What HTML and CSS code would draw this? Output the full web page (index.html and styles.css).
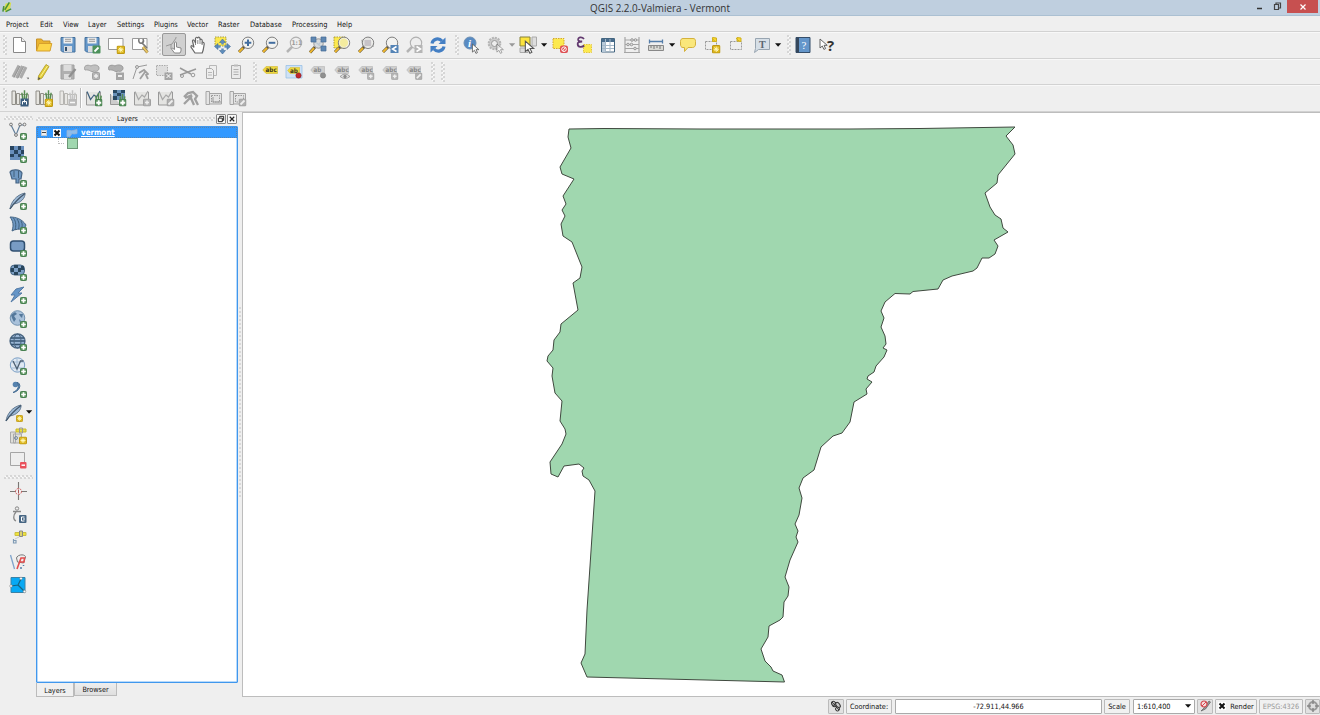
FILE: index.html
```html
<!DOCTYPE html>
<html lang="en">
<head>
<meta charset="utf-8">
<title>QGIS 2.2.0-Valmiera - Vermont</title>
<link rel="stylesheet" href="styles.css">
</head>
<body>
<svg class="defs" aria-hidden="true">
  <defs>
    <symbol id="plus" viewBox="0 0 7 7"><rect x=".5" y=".5" width="6" height="6" rx=".8" fill="#5c9560" stroke="#478050"/><path d="M3.500 1.200v4.600M1.200 3.500h4.600" stroke="#fff" stroke-width="1.700"/></symbol>
    <symbol id="star" viewBox="0 0 8 8"><rect x=".5" y=".5" width="7" height="7" rx="1" fill="#dfb81f" stroke="#bd9815"/><path d="M4 1.500v5M1.500 4h5M2.300 2.300l3.400 3.400M5.700 2.300L2.300 5.700" stroke="#fff9bd" stroke-width=".9"/></symbol>
    <symbol id="gbadge" viewBox="0 0 8 8"><rect x=".5" y=".5" width="7" height="7" rx="1" fill="#b5b5b5" stroke="#a0a0a0"/><path d="M4 2v4M2 4h4" stroke="#eee" stroke-width="1.500"/></symbol>
    <symbol id="gpen" viewBox="0 0 8 8"><rect x=".5" y=".5" width="7" height="7" rx="1" fill="#b0b0b0" stroke="#a0a0a0"/><path d="M2 6l4-4" stroke="#eee" stroke-width="1.800"/></symbol>
    <symbol id="lens" viewBox="0 0 18 18"><path d="M7.500 10.500L2 16" stroke="#5c533c" stroke-width="3"/><path d="M6 12l-4 4" stroke="#efb72c" stroke-width="2"/><circle cx="11" cy="6.800" r="5.700" fill="#f3f3f0" fill-opacity=".75" stroke="#808080"/></symbol>
    <symbol id="glens" viewBox="0 0 18 18"><path d="M7.500 10.500L2 16" stroke="#b4b4b4" stroke-width="2.500"/><circle cx="11" cy="6.800" r="5.700" fill="#eee" stroke="#b0b0b0" stroke-width="1.100"/></symbol>
    <symbol id="pointer" viewBox="0 0 10 12"><path d="M1 1v9l2.300-2 1.600 3.400 1.700-.8L5 7.300h3.200z" fill="#fff" stroke="#555" stroke-width=".9"/></symbol>
    <symbol id="tag" viewBox="0 0 16 10" preserveAspectRatio="none"><path d="M4 .7h11.500v8.600H4L.8 5z"/></symbol>
    <symbol id="scroll" viewBox="0 0 18 18"><path d="M1 2.500h3.500v13H1zM4.500 4.500h12v10.500h-12z" fill="#e4e4e4" stroke="#a5a5a5"/><path d="M6.500 6.500h8V13h-8z" fill="none" stroke="#999" stroke-dasharray="1.500 1"/></symbol>
    <symbol id="books" viewBox="0 0 18 18"><path d="M1 2h3.500v13.500H1zM5.500 4.500h3v11h-3z" fill="#e6e5e0" stroke="#908e88"/><path d="M8.500 5.500h9v10h-9z" fill="none" stroke="#999790"/></symbol>
    <symbol id="grass" viewBox="0 0 8 10"><path d="M4 10V0M2 10L1 3M6 10l1-7" stroke="currentColor" stroke-width="1.700"/></symbol>
    <symbol id="poly" viewBox="0 0 18 18"><path d="M1.500 3v13h10l4-2V3" fill="#e4e4e2" stroke="#999" stroke-width="1"/><path d="M2 2.500l3.500 8L9 6l2.500 2L15 2" fill="none" stroke="currentColor" stroke-width="1.200"/></symbol>
    <symbol id="feather" viewBox="0 0 18 18"><path d="M1 17C2 10 7 3 16 1c.5 5-4 10-11.500 11z" fill="#9bb7d4" stroke="#61788f"/><path d="M1 17C5 11 10 6 16 1.500" fill="none" stroke="#41566b" stroke-width="1.200"/></symbol>
    <symbol id="down" viewBox="0 0 8 6"><path d="M1 1.300h6.200L4.100 4.800z" fill="currentColor"/></symbol>
  </defs>
</svg>

<div class="window">
  <header class="titlebar">
    <svg class="logo" viewBox="0 0 12 13"><path d="M4 2l6-1-1 6-5 5-2-4z" fill="#d9de4b"/><path d="M8 1L3 9M2 5l-1 6M4 11l6-3" stroke="#48913c" stroke-width="1.700"/></svg>
    <h1>QGIS 2.2.0-Valmiera - Vermont</h1>
    <div class="winctl">
      <svg width="60" height="14" viewBox="0 0 60 14"><path d="M1 8.500h5" stroke="#333" stroke-width="1.500"/><path d="M18.500 4.500h4v5h-4zM20 4V3h4.500v5H23" fill="none" stroke="#444" stroke-width="1.200"/></svg>
      <button class="close" aria-label="Close"><svg width="8" height="8" viewBox="0 0 8 8"><path d="M1.500 1.500l5 5M6.500 1.500l-5 5" stroke="#fff" stroke-width="1.200"/></svg></button>
    </div>
  </header>

  <nav class="menubar">
    <span class="m-project">Project</span><span class="m-edit">Edit</span><span class="m-view">View</span><span class="m-layer">Layer</span><span class="m-settings">Settings</span><span class="m-plugins">Plugins</span><span class="m-vector">Vector</span><span class="m-raster">Raster</span><span class="m-database">Database</span><span class="m-processing">Processing</span><span>Help</span>
  </nav>

  <div class="toolbar first">
    <i class="grip"></i>
    <b><svg viewBox="0 0 18 18"><path d="M2.500 1.500h8l4 4v11h-12z" fill="#fff" stroke="#888"/><path d="M10.500 1.500v4h4" fill="#eee" stroke="#888"/></svg></b>
    <b><svg viewBox="0 0 18 18"><path d="M1.500 15V3h5l1.500 2h7v3" fill="#e9b330" stroke="#c5912b"/><path d="M1.500 15L4 7.500h12.800L15 15z" fill="#fcd549" stroke="#d7a02c"/></svg></b>
    <b><svg viewBox="0 0 18 18"><path d="M2 1.500h14v14.500H3.500L2 14.500z" fill="#6597c9" stroke="#45709c"/><path d="M4.500 1.500h9v6h-9z" fill="#eee"/><path d="M6 3.300h6M6 5.300h6" stroke="#999"/><path d="M5 10h8v6H5z" fill="#d9dce0"/><path d="M7 11v4" stroke="#35506c" stroke-width="2"/></svg></b>
    <b><svg viewBox="0 0 18 18"><path d="M2 1.500h14v14.500H3.500L2 14.500z" fill="#6597c9" stroke="#45709c"/><path d="M4.500 1.500h9v6h-9z" fill="#eee"/><path d="M6 3.300h6M6 5.300h6" stroke="#999"/><path d="M5 10h6v6H5z" fill="#d9dce0"/><rect x="9.500" y="9.500" width="8" height="8" rx="1" fill="#4c915b"/><path d="M11.500 15.500l4-4" stroke="#fff" stroke-width="1.800"/></svg></b>
    <b><svg viewBox="0 0 18 18"><path d="M1.500 2.500h14.500v11H1.500z" fill="#fff" stroke="#999"/><use href="#star" x="9.500" y="9.500" width="8.500" height="8.500"/></svg></b>
    <b><svg viewBox="0 0 18 18"><path d="M1.500 2.500h14.500v11H1.500z" fill="#fff" stroke="#999"/><path d="M8 3c-1 3 1 5 3 4l5 5M11 7c2-1 2-2 1-4" fill="none" stroke="#777" stroke-width="1.600"/><path d="M12 11l4.500 5.500" stroke="#9c854b" stroke-width="3"/><path d="M12 11l4.500 5.500" stroke="#ecc865" stroke-width="1.700"/></svg></b>
    <i class="grip grip-wide"></i>
    <b class="pressed"><svg viewBox="0 0 18 18"><path d="M1 10l6-2 4-6M6 8v5M11 2V1" stroke="#999" fill="none"/><path d="M9.500 17l-3-4 .8-1 2.200 1.500V7c0-1.400 2-1.400 2 0v4l4.500 1v3l-1 2z" fill="#fff" stroke="#888"/></svg></b>
    <b><svg viewBox="0 0 18 18"><path d="M6 17l-4-6c0-2 1.500-1.500 3 .5L3.500 5C4 3 5.500 4 6.500 7V2.500C7 .7 8.500 1 8.800 2.500V2c.5-1.500 2.200-1 2.200 1v1c.7-1.500 2.200-.7 2.200.8V7c.8-1 2-.5 2 1l-1 6-1 3z" fill="#fff" stroke="#666" stroke-width="1.200"/><path d="M6.500 7v2M8.800 4v4M11 4v4M13.200 6v3" stroke="#888"/></svg></b>
    <b><svg viewBox="0 0 18 18"><path d="M2 1h11v9H2z" fill="#fce94f" stroke="#a49b42" stroke-dasharray="1.500 1"/><path d="M9.500 3l3 3.500h-6zM9.500 18l3-3.500h-6zM1.500 10.500L5 7.500v6zM17.500 10.500L14 7.500v6z" fill="#5d8dbe" stroke="#426b98" stroke-width=".6"/><path d="M9.500 6v2.500M9.500 12.500v2M5 10.500h2.500M11.500 10.500H14" stroke="#5d8dbe" stroke-width="2.500"/></svg></b>
    <b><svg viewBox="0 0 18 18"><use href="#lens"/><path d="M11 3.500v6.600M7.700 6.800h6.600" stroke="#426d9f" stroke-width="2"/></svg></b>
    <b><svg viewBox="0 0 18 18"><use href="#lens"/><path d="M7.700 6.800h6.600" stroke="#426d9f" stroke-width="2"/></svg></b>
    <b><svg viewBox="0 0 18 18"><use href="#glens"/><text x="6.500" y="9.200" font-size="6.500" font-weight="bold" fill="#999">1:1</text></svg></b>
    <b><svg viewBox="0 0 18 18"><path d="M3 3l12 10M15 3l-6 6" stroke="#6f93b9" stroke-width="1.200"/><path d="M6 11l-5 5.500" stroke="#5c533c" stroke-width="3"/><path d="M5 12l-4 4.500" stroke="#efb72c" stroke-width="1.900"/><circle cx="9.500" cy="7.500" r="4.700" fill="#d0d4d8" fill-opacity=".8" stroke="#999"/><path d="M2 1h5v5H2zM12 1h5v5h-5zM12 10h5v5h-5z" fill="#5f87b2" stroke="#456c97" stroke-width=".7"/></svg></b>
    <b><svg viewBox="0 0 18 18"><path d="M1 1h11v11H1z" fill="#fce94f" stroke="#b0a034" stroke-dasharray="1.500 1"/><use href="#lens"/><circle cx="11" cy="6.800" r="4" fill="#f4ec9f"/></svg></b>
    <b><svg viewBox="0 0 18 18"><path d="M4 4l9-3 4 10H6z" fill="#bbb"/><use href="#lens"/><path d="M7.500 4h6.500v6H7.500z" fill="#aaa2ad" opacity=".5"/></svg></b>
    <b><svg viewBox="0 0 18 18"><use href="#lens"/><path d="M9.500 9h8v8h-8z" fill="#5484b6"/><path d="M15.500 10.500l-4 2.500 4 2.500" fill="none" stroke="#fff" stroke-width="1.500"/></svg></b>
    <b><svg viewBox="0 0 18 18"><use href="#glens"/><path d="M9.500 9h8v8h-8z" fill="#b5b5b5"/><path d="M11.500 10.500l4 2.500-4 2.500" fill="none" stroke="#fff" stroke-width="1.500"/></svg></b>
    <b><svg viewBox="0 0 18 18"><path d="M3 7.500c1-5 7-6 10-2.500M15 10.500c-1 5-7 6-10 2.500" fill="none" stroke="#447fc4" stroke-width="3.200"/><path d="M16.500 1.500v6.500h-7zM1.500 16.500V10h7z" fill="#447fc4"/></svg></b>
    <i class="grip grip-wide"></i>
    <b><svg viewBox="0 0 18 18"><circle cx="7" cy="7" r="6" fill="#588bc3" stroke="#6d8fb3"/><text x="5" y="11" font-family="Liberation Serif" font-size="11" font-weight="bold" font-style="italic" fill="#fff">i</text><use href="#pointer" x="8.500" y="7" width="9" height="11"/></svg></b>
    <b><svg viewBox="0 0 18 18"><circle cx="7.500" cy="7.500" r="5.800" fill="#ccc" stroke="#b5b5b5" stroke-width="2" stroke-dasharray="2 1"/><circle cx="7.500" cy="7.500" r="3" fill="#eee" stroke="#999"/><use href="#pointer" x="9" y="7" width="9" height="11" opacity=".6"/></svg></b>
    <em class="muted"><svg viewBox="0 0 8 6"><use href="#down"/></svg></em>
    <b><svg viewBox="0 0 18 18"><path d="M1 1h10v9H1z" fill="#fce43e" stroke="#85803a"/><path d="M13 1h4.500v9H13zM1 12h8v4.500H1z" fill="#ddd" stroke="#aaa"/><use href="#pointer" x="5" y="4" width="12" height="14"/></svg></b>
    <em><svg viewBox="0 0 8 6"><use href="#down"/></svg></em>
    <b><svg viewBox="0 0 18 18"><path d="M2 2.500h11v10H2z" fill="#fce94f" stroke="#d3a92c" stroke-dasharray="1.500 1"/><rect x="9" y="9.500" width="8" height="7.500" rx="2" fill="#de5054"/><circle cx="13" cy="13.200" r="2.300" fill="none" stroke="#fff"/><path d="M11.500 15l3-3.500" stroke="#fff"/></svg></b>
    <b><svg viewBox="0 0 18 18"><path d="M8.500 8.500h8v8h-8z" fill="#fce94f" stroke="#e3c53a" stroke-dasharray="1.500 1"/><path d="M9 3C7 .5 2.500 1 3.200 4c.3 1 2 1.500 4 1.500-3 0-5 .8-4.500 3 .5 3 4.500 3 6.500 1" fill="none" stroke="#62396f" stroke-width="1.800"/></svg></b>
    <b><svg viewBox="0 0 18 18"><path d="M2.500 2.500h13v13.500h-13z" fill="#fff" stroke="#446681"/><path d="M3 3h12v3H3z" fill="#496d8d"/><path d="M3 6h3v10H3z" fill="#b8cad9"/><path d="M6.500 3v13M11 3v13M3 9.500h12M3 12.500h12" stroke="#a5b8c8"/></svg></b>
    <b><svg viewBox="0 0 18 18"><path d="M2 1v15.500M16 1v15.500M1 16.500h16M2 4h13.500M2 8.500h13.500M2 12.500h13.500" fill="none" stroke="#a5a5a5" stroke-width="1.200"/><g fill="#ddd" stroke="#999"><circle cx="9" cy="4" r="1.300"/><circle cx="12.500" cy="4" r="1.300"/><circle cx="5" cy="8.500" r="1.300"/><circle cx="8.500" cy="8.500" r="1.300"/><circle cx="12" cy="12.500" r="1.300"/></g></svg></b>
    <b><svg viewBox="0 0 18 18"><path d="M2.500 5.500h13M2.500 3.500v4M15.500 3.500v4" stroke="#547da9" stroke-width="1.300"/><path d="M1.500 9.500h15v5h-15z" fill="#d8d8d3" stroke="#888"/><path d="M4 10v2M7 10v3M10 10v2M13 10v3" stroke="#777"/></svg></b>
    <em><svg viewBox="0 0 8 6"><use href="#down"/></svg></em>
    <b><svg viewBox="0 0 18 18"><path d="M4 2.500h10c2 0 2.500 1 2.500 3V8c0 2-1 3.500-3 3.500H9l-3.500 4v-4H4c-2 0-2.500-1.500-2.500-3.500V5.500c0-2 1-3 2.500-3z" fill="#fae77b" stroke="#d4b13c"/></svg></b>
    <b><svg viewBox="0 0 18 18"><path d="M2.500 5.500h11v8h-11z" fill="#eee" stroke="#999" stroke-dasharray="2 1"/><path d="M9 2l3 3.500M9.500 5.500V1.500l4 .5v3.500z" fill="#fad72d" stroke="#cfb021"/><use href="#star" x="9" y="9" width="8.500" height="8.500"/></svg></b>
    <b><svg viewBox="0 0 18 18"><path d="M3.500 5.500h11v8h-11z" fill="#eee" stroke="#999" stroke-dasharray="2 1"/><path d="M9 2l3 3M10 5V1.500l4 .5v3.500z" fill="#fad72d" stroke="#cfb021"/></svg></b>
    <b class="nudge"><svg viewBox="0 0 18 18"><path d="M2.500 2.500h14v11h-11l-4 3 1-4z" fill="#d6dfe7" stroke="#98a5b1"/><text x="6" y="12" font-family="Liberation Serif" font-size="10" font-weight="bold" fill="#596570">T</text></svg></b>
    <em><svg viewBox="0 0 8 6"><use href="#down"/></svg></em>
    <i class="grip late"></i>
    <b class="help"><svg viewBox="0 0 18 18"><path d="M2 1.500h14v15H2z" fill="#6496ca" stroke="#354e6a"/><path d="M2 1.500h3v15H2z" fill="#34475d"/><text x="7.500" y="13" font-family="Liberation Serif" font-size="11" fill="#fff">?</text></svg></b>
    <b><svg viewBox="0 0 18 18"><use href="#pointer" x="1" y="1" width="10" height="14"/><text x="9" y="15" font-family="Open Sans" font-size="15" font-weight="bold" fill="#333">?</text></svg></b>
  </div>

  <div class="toolbar second">
    <i class="grip"></i>
    <b><svg viewBox="0 0 18 18"><path d="M2 14L8 2.500M5.500 15L11.500 3M9.500 15L15 4" stroke="#aaa" stroke-width="3"/><path d="M3 14.500L9 3M7 15L13 3" stroke="#888" stroke-width=".7"/><path d="M15.500 14.500h3l-1.500 2z" fill="#888"/></svg></b>
    <b><svg viewBox="0 0 18 18"><path d="M3.500 13L11 1.500l3 2L7 15l-4 2z" fill="#e5cf33" stroke="#b9a63c"/><path d="M3 17l.5-3 2 1.500z" fill="#555"/><path d="M5.500 13.500L12.500 3" stroke="#f7ef9b"/></svg></b>
    <b><svg viewBox="0 0 18 18"><path d="M2 2h13v14H2z" fill="#b0b0b0" stroke="#a0a0a0"/><path d="M4.500 2h8v6h-8zM5 11h7v5H5z" fill="#ddd"/><path d="M10 14l6.500-8" stroke="#909090" stroke-width="2.300"/></svg></b>
    <b><svg viewBox="0 0 18 18"><path d="M2 7c-2-4 2-6 6-4 3-2 8-1 8 2s-3 4-5 3c-3 2-4-2-9-1z" fill="#c0c0c0" stroke="#a0a0a0"/><use href="#gbadge" x="9" y="9" width="8" height="8"/></svg></b>
    <b><svg viewBox="0 0 18 18"><path d="M2 7c-2-4 2-6 6-4 3-2 8-1 8 2s-3 4-5 3c-3 2-4-2-9-1z" fill="#b0b0b0" stroke="#999"/><path d="M9 9.500h8v7.500H9z" fill="#a5a5a5"/><path d="M11 13h4" stroke="#eee" stroke-width="2"/></svg></b>
    <b><svg viewBox="0 0 18 18"><path d="M2 16L6 4l10-2" fill="none" stroke="#999"/><circle cx="6" cy="4" r="1.500" fill="#ddd" stroke="#999"/><path d="M8 10l5-3 4 4-2 1 2 4M9 16l5-7" stroke="#a0a0a0" stroke-width="1.800" fill="none"/></svg></b>
    <b><svg viewBox="0 0 18 18"><path d="M1.500 2.500h11v10h-11z" fill="#ddd" stroke="#aaa" stroke-dasharray="1.500 1"/><path d="M9.500 9.500h8v7.500h-8z" fill="#a5a5a5"/><path d="M11.500 11l4 4M15.500 11l-4 4" stroke="#fff"/></svg></b>
    <b><svg viewBox="0 0 18 18"><path d="M1 5l11 6M1 12l16-6" stroke="#999" stroke-width="1.500"/><circle cx="14" cy="12" r="1.800" fill="none" stroke="#999"/><circle cx="3" cy="13" r="1.500" fill="none" stroke="#999"/></svg></b>
    <b><svg viewBox="0 0 18 18"><path d="M6.500 2.500h7v10h-7z" fill="#eee" stroke="#b8b8b8"/><path d="M3.500 5.500h5l2 2v8h-7z" fill="#eee" stroke="#aaa"/><path d="M5 9.500h4M5 12h4" stroke="#b8b8b8"/></svg></b>
    <b><svg viewBox="0 0 18 18"><path d="M4.500 2.500h9v13h-9z" fill="#eaeaea" stroke="#aaa"/><path d="M7 1.500h4v2H7z" fill="#bbb"/><path d="M6.500 6.500h5M6.500 9h5M6.500 11.500h5" stroke="#b0b0b0"/></svg></b>
    <i class="grip grip-wide"></i>
    <b><svg class="label yellow" viewBox="0 0 18 18"><use href="#tag" x="1" y="3" width="16" height="8"/><text x="4.500" y="9.300">abc</text></svg></b>
    <b><svg class="label yellow" viewBox="0 0 18 18"><path class="labelbox" d="M1 2.500h16v12.500H1z"/><use href="#tag" x="2" y="4" width="13" height="7"/><text x="5" y="9.800">ab</text><circle class="pin" cx="13.500" cy="12.500" r="2.600"/></svg></b>
    <b><svg class="label" viewBox="0 0 18 18"><use href="#tag" x="1" y="3" width="15" height="8"/><text x="4.500" y="9.300">ab</text><circle class="gpin" cx="14" cy="12.500" r="2.600"/></svg></b>
    <b><svg class="label" viewBox="0 0 18 18"><use href="#tag" x="1" y="3" width="15" height="8"/><text x="4.500" y="9.300">abc</text><path class="eye" d="M7 13.500q5-5 10 0q-5 4-10 0z"/><circle class="gpin" cx="12" cy="13.500" r="1.300"/></svg></b>
    <b><svg class="label" viewBox="0 0 18 18"><use href="#tag" x="1" y="3" width="15" height="8"/><text x="4.500" y="9.300">abc</text><use href="#gbadge" x="10" y="9.500" width="7.500" height="7.500"/></svg></b>
    <b><svg class="label" viewBox="0 0 18 18"><use href="#tag" x="1" y="3" width="15" height="8"/><text x="4.500" y="9.300">abc</text><use href="#gbadge" x="10" y="9.500" width="7.500" height="7.500"/></svg></b>
    <b><svg class="label" viewBox="0 0 18 18"><use href="#tag" x="1" y="3" width="15" height="8"/><text x="4.500" y="9.300">abc</text><use href="#gpen" x="10" y="9.500" width="7.500" height="7.500"/></svg></b>
    <i class="grip grip-wide"></i><i class="grip grip-end"></i>
  </div>

  <div class="toolbar last">
    <i class="grip"></i>
    <b><svg viewBox="0 0 18 18"><use href="#books"/><use class="green" href="#grass" x="10" y="1" width="7" height="9"/><path d="M9.500 9.500h8v8h-8z" fill="#3b5d7e"/><path d="M11.500 15.500v-3h4v3M13.500 10.500v3" stroke="#fff" fill="none"/></svg></b>
    <b><svg viewBox="0 0 18 18"><use href="#books"/><use class="green" href="#grass" x="10" y="1" width="7" height="9"/><use href="#star" x="9.500" y="9.500" width="8.500" height="8.500"/></svg></b>
    <b><svg viewBox="0 0 18 18" opacity=".6"><use href="#books"/><use class="gray" href="#grass" x="10" y="1" width="7" height="9"/><path d="M9.500 10h8v7h-8z" fill="#999"/><path d="M11 13.500h5" stroke="#fff" stroke-width="1.500"/></svg></b>
    <i class="divider"></i>
    <b><svg viewBox="0 0 18 18"><use class="navy" href="#poly"/><use class="green" href="#grass" x="9.500" y="4" width="8" height="9"/><use href="#plus" x="10" y="10" width="7.500" height="7.500"/></svg></b>
    <b><svg viewBox="0 0 18 18"><path d="M1.500 5v10.500h10" stroke="#999" fill="#ccc"/><path d="M4 1h12v10H4z" fill="#6991b9"/><path d="M4 1h4v3H4zM12 1h4v3h-4zM8 4h4v3H8zM4 7h4v4H4z" fill="#294963"/><use class="green" href="#grass" x="9.500" y="5" width="8" height="8"/><use href="#plus" x="10" y="10" width="7.500" height="7.500"/></svg></b>
    <b><svg viewBox="0 0 18 18"><use class="gray" href="#poly"/><use href="#gbadge" x="10" y="9.500" width="8" height="8"/></svg></b>
    <b><svg viewBox="0 0 18 18"><use class="gray" href="#poly"/><use href="#gpen" x="9.500" y="9.500" width="8" height="8"/></svg></b>
    <b><svg viewBox="0 0 18 18"><path d="M3 8l4-4 5-1 4 4-2 3 3 6M4 9l7-3M9 7l4 9M3 15l8-8" stroke="#a0a0a0" stroke-width="2.300" fill="none"/></svg></b>
    <b><svg viewBox="0 0 18 18"><use href="#scroll"/><path d="M8 8v5h8" fill="none" stroke="#999"/></svg></b>
    <b><svg viewBox="0 0 18 18"><use href="#scroll"/><use href="#gpen" x="9.500" y="9.500" width="8" height="8"/></svg></b>
  </div>

  <main class="workspace">
    <aside class="sidebar">
      <i class="hgrip"></i>
      <b><svg viewBox="0 0 18 18"><path d="M2 3l5 10 4-10h4" fill="none" stroke="#637f9b" stroke-width="1.200"/><g fill="#eee" stroke="#777"><circle cx="2" cy="2.500" r="1.400"/><circle cx="7" cy="13" r="1.400"/><circle cx="11" cy="2.500" r="1.400"/><circle cx="15.500" cy="2.500" r="1.400"/></g><use href="#plus" x="11" y="11" width="7" height="7"/></svg></b>
      <b><svg viewBox="0 0 18 18"><path d="M1 1h14v14H1z" fill="#688fbd"/><path d="M1 1h4v4H1zM9 1h3v4H9zM5 5h4v4H5zM12 5h3v4h-3zM1 9h4v3H1zM9 9h3v3H9z" fill="#28445f"/><use href="#plus" x="11" y="11" width="7" height="7"/></svg></b>
      <b><svg viewBox="0 0 18 18"><path d="M1 3c2-3 10-3 12 1l-1 6h-2v4H7v-4H3z" fill="#6f98c2" stroke="#466484" stroke-width="1.200"/><path d="M5 2v6M9.500 2v7" stroke="#42607d"/><use href="#plus" x="11" y="11" width="7" height="7"/></svg></b>
      <b><svg viewBox="0 0 18 18"><use href="#feather"/><use href="#plus" x="11" y="11" width="7" height="7"/></svg></b>
      <b><svg viewBox="0 0 18 18"><path d="M1 1c6 0 12 2 16 8l-2 4c-4 0-9 0-12 2 2-6 1-10-2-14z" fill="#6f98c2" stroke="#456584"/><path d="M4.500 2c3 4 2.500 9 1.500 12M8 3c3 4 2 8 1.500 10M12 5c2 3 1 6 .5 8" stroke="#3e607e" fill="none"/><use href="#plus" x="11" y="11" width="7" height="7"/></svg></b>
      <b><svg viewBox="0 0 18 18"><rect x="1.500" y="2" width="14" height="10" rx="3" fill="#789cc4" stroke="#315071" stroke-width="1.500"/><use href="#plus" x="11" y="11" width="7" height="7"/></svg></b>
      <b><svg viewBox="0 0 18 18"><rect x="1.500" y="2" width="14" height="10" rx="4" fill="#7c9fc5" stroke="#456482"/><path d="M5 2h4v3H5zM12 3h3v4h-3zM2 5h3v4H2zM9 5h3v4H9zM5 9h4v3H5z" fill="#29465d"/><use href="#plus" x="11" y="11" width="7" height="7"/></svg></b>
      <b><svg viewBox="0 0 18 18"><path d="M15 1L7 3 2 9h4l-4 7L13 7H9z" fill="#6595c7" stroke="#547ba6"/><use href="#plus" x="11" y="11" width="7" height="7"/></svg></b>
      <b><svg viewBox="0 0 18 18"><circle cx="8.500" cy="8" r="7.300" fill="#a9c1da" stroke="#7090ae"/><path d="M2 5l4-3 2 2-3 2 2 3-2 3-2-4zM10 4l4 0-1 4-2-2zM10 9l2 2-1 2z" fill="#53779a"/><use href="#plus" x="11" y="11" width="7" height="7"/></svg></b>
      <b><svg viewBox="0 0 18 18"><ellipse cx="8.500" cy="8" rx="7.500" ry="7" fill="#9ab6d5" stroke="#4a6580" stroke-width="1.300"/><path d="M1 8h15M2 5h13M2 11.500h12" stroke="#365472" stroke-width="1.500"/><ellipse cx="8.500" cy="8" rx="3.500" ry="7" fill="none" stroke="#4a6580"/><use href="#plus" x="11" y="11" width="7" height="7"/></svg></b>
      <b><svg viewBox="0 0 18 18"><circle cx="8.500" cy="8" r="7.200" fill="#e0e9f2" stroke="#7b9fc5"/><path d="M2 5h13M2 11h13M8 1v14" stroke="#a2bdd8"/><path d="M4 4l4 8 3.500-8h3" fill="none" stroke="#4c5f72" stroke-width="1.300"/><use href="#plus" x="11" y="11" width="7" height="7"/></svg></b>
      <b><svg viewBox="0 0 18 18"><circle cx="6.500" cy="4.500" r="2.800" fill="#5682ae"/><path d="M8 2.500c3 3 1 8-4 10 6-1 9-7 5-10z" fill="#5682ae" stroke="#456d93"/><use href="#plus" x="11" y="11" width="7" height="7"/></svg></b>
      <b class="split"><svg viewBox="0 0 18 18"><use href="#feather"/><use href="#star" x="11" y="11" width="7" height="7"/></svg><svg class="side-arrow" viewBox="0 0 8 6"><use href="#down"/></svg></b>
      <b><svg viewBox="0 0 18 18"><path d="M1.500 5h5v11h-5zM4.500 7h8v9h-8z" fill="#deded9" stroke="#aaa"/><path d="M7 2h10v3H7z" fill="#e8dd48" stroke="#c8b82c"/><path d="M10.500 1h3v5h-3z" fill="none" stroke="#999"/><circle cx="7" cy="11" r="1.500" fill="none" stroke="#768ba2"/><use href="#star" x="10" y="9.500" width="8" height="8"/></svg></b>
      <b><svg viewBox="0 0 18 18"><path d="M1.500 1.500h14v13h-14z" fill="#eee" stroke="#a5a5a5"/><rect x="11" y="11" width="6.500" height="6.500" rx="1" fill="#e9515c"/><path d="M12.500 14.200h3.500" stroke="#fff" stroke-width="1.500"/></svg></b>
      <i class="hgrip lower"></i>
      <b><svg viewBox="0 0 18 18"><path d="M1 9.500h6M12 9.500h6M9.500 0v6.500M9.500 12.500V18" stroke="#7b7774" stroke-width="1.100"/><circle cx="9.500" cy="9.500" r="3" fill="none" stroke="#d05b5b" stroke-dasharray="2 1"/><path d="M9.500 7.500v4" stroke="#a95454"/></svg></b>
      <b><svg viewBox="0 0 18 18"><circle cx="8" cy="2.500" r="1.700" fill="#eee" stroke="#888"/><path d="M4 5.500h8M7 6c-3 3-3 8 0 9" fill="none" stroke="#888" stroke-width="1.300"/><rect x="10" y="9" width="7.500" height="8" rx="1" fill="#466582"/><path d="M15.500 11h-3v4h3M14 13h2" fill="none" stroke="#fff"/></svg></b>
      <b><svg viewBox="0 0 18 18"><path d="M6 3.500h11v3H6z" fill="#eee23c" stroke="#cbbf43"/><path d="M10.500 2h3v5.500h-3z" fill="#ddd36c" stroke="#888"/><path d="M6 10l4-2" stroke="#ccc"/><path d="M4.500 10v4h2.500v-2.500H4.500" fill="none" stroke="#809cb5" stroke-width="1.200"/></svg></b>
      <b><svg viewBox="0 0 18 18"><path d="M1.500 2l4 14" fill="none" stroke="#7fa3cb" stroke-width="1.300"/><path d="M7.500 5c1-4 9-4 9-1l-2 6-6-1z" fill="#eee" stroke="#777"/><path d="M8 16l4-11h3.500l-.5 4h-4" fill="none" stroke="#e24e4e" stroke-width="1.600"/><path d="M12 14v2M14.500 12v1" stroke="#547fab" stroke-width="1.500"/></svg></b>
      <b><svg viewBox="0 0 18 18"><path d="M2 1.500h14v15H2z" fill="#08a9f4" stroke="#3b82a6"/><path d="M2 10l7-1 3-6M9 9l6 6" fill="none" stroke="#176482" stroke-width="1.200"/><g fill="#fff" stroke="#777" stroke-width=".5"><circle cx="2" cy="10" r="1.300"/><circle cx="12" cy="2.500" r="1.300"/><circle cx="15.500" cy="15.500" r="1.300"/></g></svg></b>
    </aside>

    <section class="dock">
      <div class="dock-title"><i class="hgrip"></i><span>Layers</span><i class="hgrip"></i>
        <button aria-label="Float"><svg viewBox="0 0 9 9"><path d="M3 3V1.500h4.500V6H6M1.500 3.500H6v4H1.500z" fill="none" stroke="#222" stroke-width="1.100"/></svg></button>
        <button aria-label="Close panel"><svg viewBox="0 0 9 9"><path d="M2 2l5 5M7 2L2 7" stroke="#222" stroke-width="1.300"/></svg></button>
      </div>
      <div class="tree">
        <div class="row selected">
          <span class="expander"></span>
          <span class="check"><svg viewBox="0 0 8 8"><path d="M1.500 1.500l5 5M6.500 1.500l-5 5" stroke="#111" stroke-width="2"/></svg></span>
          <svg class="layer-icon" viewBox="0 0 12 8"><path d="M1 1.500c2-1 4 1 6 0l4-1v4l-3 .5-2-.5-2 3H1z" fill="#8fbdea" stroke="#9ab4d2" stroke-width=".8"/></svg>
          <span class="layer-name">vermont</span>
        </div>
        <div class="legend"><i class="branch"></i><i class="swatch"></i></div>
      </div>
      <div class="tabs"><span class="tab active">Layers</span><span class="tab">Browser</span></div>
    </section>
    <div class="splitter"></div>

    <section class="map">
      <svg viewBox="243 113 1077 583" width="1077" height="583">
        <polygon points="569,129 604,128.500 700,129 850,129 920,128.500 1015,127 1006,136 1013,145 1015,154 998,175 997,183 985,193 990,207 995,215 1001,219 1003,228 1008,232 994,240 998,246 995,254 989,258 982,258 977,268 973,271 952,276 943,280 938,289 913,291.500 910,294 895,293.500 885,302 881,311 884,318 881,327 885,336 886,344 883,348 887,350 884,357 876,366 874,372 868,376 867,379 872,382 866,389 867,394 854,402 850,422 842,433 833,436 821,447 814,470 803,478 799,488 802,498 799,515 795,524 798,531 796,537 798,542 790,560 785,577 789,587 788,596 784,602 783,617 780,620 769,626 768,637 761,649 765,661 771,667 773,671 782,675 784.500,682 587,677 581,663 585,654 587,610 590,566 595,491 589,480 583,476 582,471 584,468 579,464 564,466 558,477 551,474 550,462 562,444 566,434 565,429 560,421 562,401 555,393 552,376 553,368 547,361 548,356 553,350 554,340 560,332 561,324 578,310 573,283 580,278 582,267 572,242 563,236 561,224 565,216 562,210 566,204 563,196 574,179 562,174 560,167 571,148 568,137" fill="#a0d7af" stroke="#40493f" stroke-width="1"/>
      </svg>
    </section>
  </main>

  <footer class="statusbar">
    <span class="cell tiny"><svg viewBox="0 0 12 12"><g fill="#ccc" stroke="#333"><ellipse cx="4" cy="4" rx="2" ry="3" transform="rotate(-35 4 4)"/><ellipse cx="8" cy="5" rx="1.800" ry="3" transform="rotate(-35 8 5)"/><circle cx="7.500" cy="9" r="2"/></g><path d="M2 2l7 8M6 2L3 7" stroke="#333"/></svg></span>
    <span class="cell coord">Coordinate:</span>
    <span class="cell input value">-72.911,44.966</span>
    <span class="cell scale">Scale</span>
    <span class="cell input combo">1:610,400<svg viewBox="0 0 8 6"><use href="#down"/></svg></span>
    <span class="cell tiny"><svg viewBox="0 0 12 12"><path d="M2 11l3-3 5-7 1.500 1-5 7z" fill="#999" stroke="#666" stroke-width=".8"/><circle cx="5" cy="4" r="3" fill="#f7dede" stroke="#d5474d" stroke-width="1.200"/><path d="M3 6l4-4" stroke="#d5474d"/></svg></span>
    <span class="cell render"><span class="check"><svg viewBox="0 0 8 8"><path d="M1.500 1.500l5 5M6.500 1.500l-5 5" stroke="#111" stroke-width="2"/></svg></span>Render</span>
    <span class="cell epsg">EPSG:4326</span>
    <span class="cell tiny world"><svg viewBox="0 0 12 12"><circle cx="6" cy="6" r="4" fill="#ddd" stroke="#999" stroke-width="2"/><path d="M6 0v4M6 8v4M0 6h4M8 6h4" stroke="#888" stroke-width="1.500"/></svg></span>
  </footer>
</div>
</body>
</html>
```
FILE: styles.css
```css
* { box-sizing: border-box; }
body { margin: 0; font-family: "DejaVu Sans Condensed", "DejaVu Sans", sans-serif; font-size: 7.4px; color: #111; overflow: hidden; }
button { padding: 0; margin: 0; border: 0; font: inherit; }
.defs { display: none; }
.window { width: 1320px; height: 715px; display: flex; flex-direction: column; background: #efefef; }

.titlebar { height: 16px; flex: none; background: #bfcfdf; border-bottom: 1px solid #abc0d2; display: grid; grid-template-columns: 70px 1fr 70px; }
.titlebar h1 { margin: 0; font: 400 9.9px/16px "Open Sans", sans-serif; color: #333; text-align: center; white-space: nowrap; }
.logo { width: 11px; height: 13px; margin: 1px 0 0 2px; }
.winctl { display: flex; justify-content: flex-end; align-items: flex-start; padding-right: 2px; }
.winctl > svg { flex: none; width: 60px; margin-right: -29px; }
.close { position: relative; flex: none; width: 31px; height: 13px; background: #c75050; display: flex; align-items: center; justify-content: center; }

.menubar { height: 15px; flex: none; display: flex; align-items: center; padding: 1px 0 0 6px; white-space: nowrap; }
.m-project { width: 34px; }
.m-edit { width: 23px; }
.m-view { width: 25px; }
.m-layer { width: 29px; }
.m-settings { width: 37px; }
.m-plugins { width: 33px; }
.m-vector { width: 31px; }
.m-raster { width: 32px; }
.m-database { width: 42px; }
.m-processing { width: 45px; }

.toolbar { height: 27px; flex: none; display: flex; align-items: center; padding-left: 3px; border-top: 1px solid #d2d2d2; box-shadow: inset 0 1px #f8f8f8; }
.toolbar.first { padding-bottom: 1px; }
.toolbar.second { height: 26px; }
.toolbar.last { height: 28px; border-bottom: 1px solid #d2d2d2; }
.toolbar b, .sidebar b { flex: none; display: flex; align-items: center; justify-content: center; font-weight: 400; }
.toolbar b { width: 24px; height: 23px; }
.toolbar b > svg, .sidebar b > svg { width: 18px; height: 18px; flex: none; }
.toolbar b > svg { margin-left: -1px; }
.toolbar .pressed { background: #d0d0d0; border: 1px solid #999; border-radius: 2px; }
.toolbar em { flex: none; width: 8px; display: flex; color: #111; }
.toolbar em.muted { color: #999; }
.toolbar em svg { width: 8px; height: 6px; }
.toolbar .nudge { margin-left: 2px; }
.grip { flex: none; width: 5px; height: 20px; background: radial-gradient(circle at 1px 1px, #ccc .6px, transparent 1px) 0 0 / 5px 4px, radial-gradient(circle at 3px 3px, #ccc .6px, transparent 1px) 0 0 / 5px 4px, radial-gradient(circle at 2px 2px, #fff .6px, transparent 1px) 0 0 / 5px 4px; }
.grip-wide { margin-left: 5px; }
.grip-end { margin-left: 5px; }
.late { margin-left: 5px; }
.help { margin-left: -1px; }
.divider { width: 2px; height: 20px; border-left: 1px solid #bbb; border-right: 1px solid #fff; }
.green { color: #568c51; }
.navy { color: #3d5f7d; }
.gray { color: #a8a8a8; }
.label { fill: #d0d0d0; stroke: #b5b5b5; stroke-width: .7; }
.label.yellow { fill: #f0d93c; stroke: #d0b835; }
.label text { font: bold 6.3px "DejaVu Sans Condensed", sans-serif; fill: #888; stroke: none; }
.label.yellow text { fill: #3d3922; }
.labelbox { fill: #cfe2f5; stroke: #91bbe5; }
.eye { fill: #ddd; stroke: #888; }
.pin { fill: #c3272c; stroke: #8c2024; }
.gpin { fill: #909090; stroke: #808080; }

.workspace { flex: 1; min-height: 0; display: flex; }
.sidebar { width: 36px; flex: none; padding-top: 4px; display: flex; flex-direction: column; align-items: center; }
.sidebar b { width: 36px; height: 23.5px; }
.sidebar b.split { position: relative; padding-right: 8px; }
.sidebar b .side-arrow { position: absolute; left: 25px; top: 8px; width: 8px; height: 6px; }
.hgrip { flex: none; height: 4px; background: radial-gradient(circle at 1px 3px, #ccc .6px, transparent 1px) 0 0 / 4px 4px, radial-gradient(circle at 3px 1px, #ccc .6px, transparent 1px) 0 0 / 4px 4px, radial-gradient(circle at 2px 2px, #fff .6px, transparent 1px) 0 0 / 4px 4px; }
.sidebar > .hgrip { width: 29px; margin-bottom: -1px; }
.sidebar > .lower { margin: 3px 0 1px; }

.dock { width: 202px; flex: none; display: flex; flex-direction: column; }
.dock-title { height: 14px; flex: none; display: flex; align-items: center; font-size: 7px; padding-bottom: 1px; }
.dock-title .hgrip { flex: 1; }
.dock-title span { padding: 0 5px 0 6px; }
.dock-title .hgrip:first-child { flex: 0 0 75px; }
.dock-title button { width: 10px; height: 10px; border: 1px solid #888; border-radius: 1px; background: #f8f8f8; margin-left: 1px; display: flex; }
.dock-title button:last-child { margin-right: 1px; }
.tree { height: 557px; flex: none; background: #fff; border: 1px solid #4097ed; border-radius: 1px; box-shadow: inset 0 0 0 .5px #72b5f7; }
.row { height: 11px; display: flex; align-items: center; background: #3399ff; color: #fff; border: 1px dotted #5b83aa; }
.expander { width: 6px; height: 6px; margin-left: 3px; background: linear-gradient(#444, #444) center / 4px 1px no-repeat #eee; border: 1px solid #bcc9d5; }
.check { flex: none; display: flex; width: 8px; height: 8px; background: #fff; }
.row .check { margin-left: 6px; }
.layer-icon { width: 12px; height: 8px; margin-left: 5px; }
.layer-name { margin-left: 3px; font-size: 7.9px; font-weight: bold; line-height: 9px; text-decoration: underline; }
.legend { display: flex; padding-left: 21px; height: 12px; }
.branch { width: 6px; height: 6px; border-left: 1px dotted #bbb; border-bottom: 1px dotted #bbb; }
.swatch { width: 11px; height: 11px; margin-left: 3px; background: #a0d7af; border: 1px solid #6c9776; }
.tabs { display: flex; align-items: flex-start; font-size: 7.2px; }
.tab { height: 13px; width: 43px; line-height: 13px; text-align: center; border: 1px solid #bbb; border-top: 0; background: linear-gradient(#eee, #dfdfdf); }
.tab.active { height: 14px; width: 38px; line-height: 15px; background: #f0f0f0; }
.splitter { width: 4px; flex: none; }
.splitter::before { content: ""; display: block; height: 192px; margin-top: 195px; background: radial-gradient(circle at 2px 1px, #d0d0d0 .6px, transparent 1px) 0 0 / 4px 4px; }
.map { flex: 1; border: 1px solid #bdbdbd; border-right: 0; background: #fff; overflow: hidden; }
.map svg { display: block; }

.statusbar { height: 18px; flex: none; display: flex; align-items: center; justify-content: flex-end; gap: 2px; font-size: 7.3px; white-space: nowrap; }
.cell { height: 15px; flex: none; border: 1px solid #bbb; border-radius: 1px; display: flex; align-items: center; justify-content: center; background: #f1f1f1; }
.tiny { width: 16px; background: #e2e2e2; }
.tiny svg { width: 12px; height: 12px; flex: none; }
.world { width: 15px; }
.coord { width: 46px; }
.input { background: #fff; border-color: #aaa; margin-left: 1px; }
.value { width: 207px; }
.scale { width: 26px; }
.combo { width: 62px; justify-content: space-between; padding: 0 2px 0 3px; }
.combo svg { width: 8px; height: 6px; }
.render { width: 42px; gap: 4px; }
.epsg { width: 44px; color: #999; }
```
